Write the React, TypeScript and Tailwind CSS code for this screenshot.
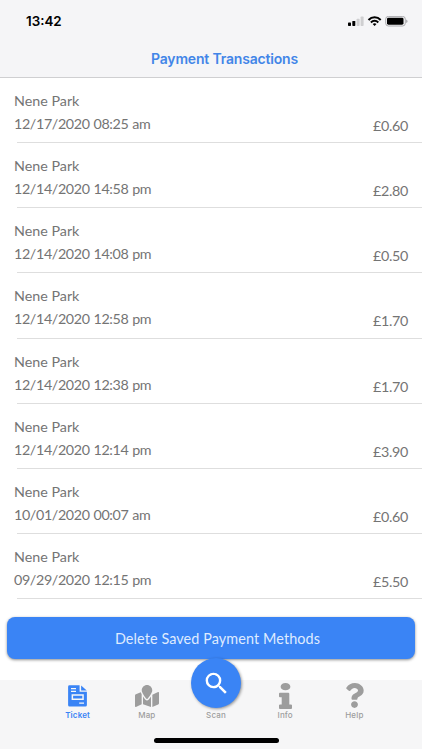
import React from "react";
import { FaInfo, FaMapMarked, FaQuestion } from "react-icons/fa";
import { MdSearch } from "react-icons/md";

const transactions = [
  { date: "12/17/2020 08:25 am", amount: "£0.60" },
  { date: "12/14/2020 14:58 pm", amount: "£2.80" },
  { date: "12/14/2020 14:08 pm", amount: "£0.50" },
  { date: "12/14/2020 12:58 pm", amount: "£1.70" },
  { date: "12/14/2020 12:38 pm", amount: "£1.70" },
  { date: "12/14/2020 12:14 pm", amount: "£3.90" },
  { date: "10/01/2020 00:07 am", amount: "£0.60" },
  { date: "09/29/2020 12:15 pm", amount: "£5.50" },
];

function StatusBar() {
  return (
    <div className="flex h-[42px] items-center justify-between pl-[26px] pr-[14px]">
      <span className="pt-px text-[13.4px] font-semibold leading-none text-black">13:42</span>
      <svg width="60" height="12" viewBox="0 0 60 12" className="mt-[2px] block">
        <rect x="0" y="6.6" width="3" height="3.4" rx="0.7" fill="#000" />
        <rect x="4.3" y="4.9" width="3" height="5.1" rx="0.7" fill="#000" />
        <rect x="8.6" y="2.7" width="3" height="7.3" rx="0.7" fill="#cfcfd1" />
        <rect x="12.6" y="0.6" width="3" height="9.4" rx="0.7" fill="#cfcfd1" />
        <g fill="none" stroke="#000" strokeWidth="2">
          <path d="M20.5 4C24 0.3 29.2 0.3 32.7 4" />
          <path d="M22.9 6.5C25.1 4.3 28.1 4.3 30.3 6.5" />
        </g>
        <path d="M24.7 8C25.9 6.9 27.3 6.9 28.5 8L26.6 10Z" fill="#000" />
        <rect x="37.7" y="0.4" width="19.6" height="9.6" rx="2.7" fill="none" stroke="#a2a2a5" strokeWidth="0.9" />
        <rect x="39" y="1.7" width="16.5" height="7" rx="1.4" fill="#000" />
        <path d="M58.2 3.5C60 4.1 60 6.3 58.2 6.9Z" fill="#a2a2a5" />
      </svg>
    </div>
  );
}

function TicketIcon() {
  return (
    <svg width="19" height="22" viewBox="0 0 19 22" className="block">
      <path
        fill="currentColor"
        fillRule="evenodd"
        d="M1.5 0.3H11.6V6.7H18.9V20Q18.9 21.5 17.4 21.5H1.5Q0.1 21.5 0.1 20V1.7Q0.1 0.3 1.5 0.3ZM3 3V4.3H8V3ZM3 5.8V7.1H8V5.8ZM3.6 9.3V15.1H15.8V9.3ZM5.1 10.8H14.3V13.6H5.1ZM11.2 17.5V18.8H16V17.5Z"
      />
      <path d="M13.1 0.4L18.8 5.4H13.1Z" fill="currentColor" />
    </svg>
  );
}

function Tab({ label, active, children }: { label: string; active?: boolean; children?: React.ReactNode }) {
  return (
    <div className={`flex w-[69.2px] flex-col items-center ${active ? "text-[#3a84f5]" : "text-[#9d9d9d]"}`}>
      <div className="flex h-[29px] items-end justify-center">{children}</div>
      <span className={`mt-[1px] text-[8px] leading-[10px] tracking-[0.15px] ${active ? "font-semibold" : "font-medium"}`}>
        {label}
      </span>
    </div>
  );
}

export default function App() {
  return (
    <div className="flex h-[750px] w-[422px] flex-col overflow-hidden bg-white font-['Inter','Liberation_Sans',sans-serif]">
      <header className="h-[78px] shrink-0 border-b border-[#cfcfd1] bg-[#f5f5f7]">
        <StatusBar />
        <h1 className="pl-[27px] pt-[7px] text-center text-[14px] font-semibold leading-[20px] tracking-[-0.18px] text-[#4285e8]">
          Payment Transactions
        </h1>
      </header>

      <main className="h-[539px] shrink-0 font-['Lato',sans-serif] text-[14.3px] text-[#747474]">
        <ul>
          {transactions.map((t) => (
            <li key={t.date} className="flex h-[65.14px] flex-col justify-between">
              <div className="flex items-end justify-between pl-[14px] pr-[14px] pt-[11px]">
                <div className="leading-[23px]">
                  <p>Nene Park</p>
                  <p className="tracking-[-0.36px] [word-spacing:0.5px]">{t.date}</p>
                </div>
                <span className="translate-y-[2px] leading-[23px] tracking-[-0.3px]">{t.amount}</span>
              </div>
              <div className="ml-[17px] h-px bg-[#dedede]" />
            </li>
          ))}
        </ul>
      </main>

      <button className="mx-[7px] flex h-[42px] shrink-0 items-center justify-center rounded-[8px] bg-[#3a84f5] pl-[13px] pt-px font-['Lato',sans-serif] text-[14.4px] tracking-[0.1px] text-[#dfebff] shadow-[0_1px_3px_rgba(0,0,0,0.45)]">
        Delete Saved Payment Methods
      </button>

      <nav className="relative mt-[21px] flex h-[69px] shrink-0 justify-center bg-[#f6f6f7] pl-[10px]">
        <Tab label="Ticket" active>
          <div className="mb-[2px]"><TicketIcon /></div>
        </Tab>
        <Tab label="Map">
          <FaMapMarked className="mb-[2px] h-[22px] w-[24px]" preserveAspectRatio="none" />
        </Tab>
        <Tab label="Scan" />
        <Tab label="Info">
          <FaInfo className="h-[26px] w-[13px]" preserveAspectRatio="none" />
        </Tab>
        <Tab label="Help">
          <FaQuestion className="mb-[1px] h-[25px] w-[19px]" preserveAspectRatio="none" />
        </Tab>
        <div className="absolute left-[191px] top-[-22px] flex h-[50px] w-[50px] items-center justify-center rounded-full bg-[#3a84f5] text-white shadow-[1px_1px_3px_rgba(0,0,0,0.4)]">
          <MdSearch className="h-[29px] w-[29px]" />
        </div>
        <div className="absolute left-[154px] top-[58px] h-[5px] w-[125px] rounded-full bg-black" />
      </nav>
    </div>
  );
}
